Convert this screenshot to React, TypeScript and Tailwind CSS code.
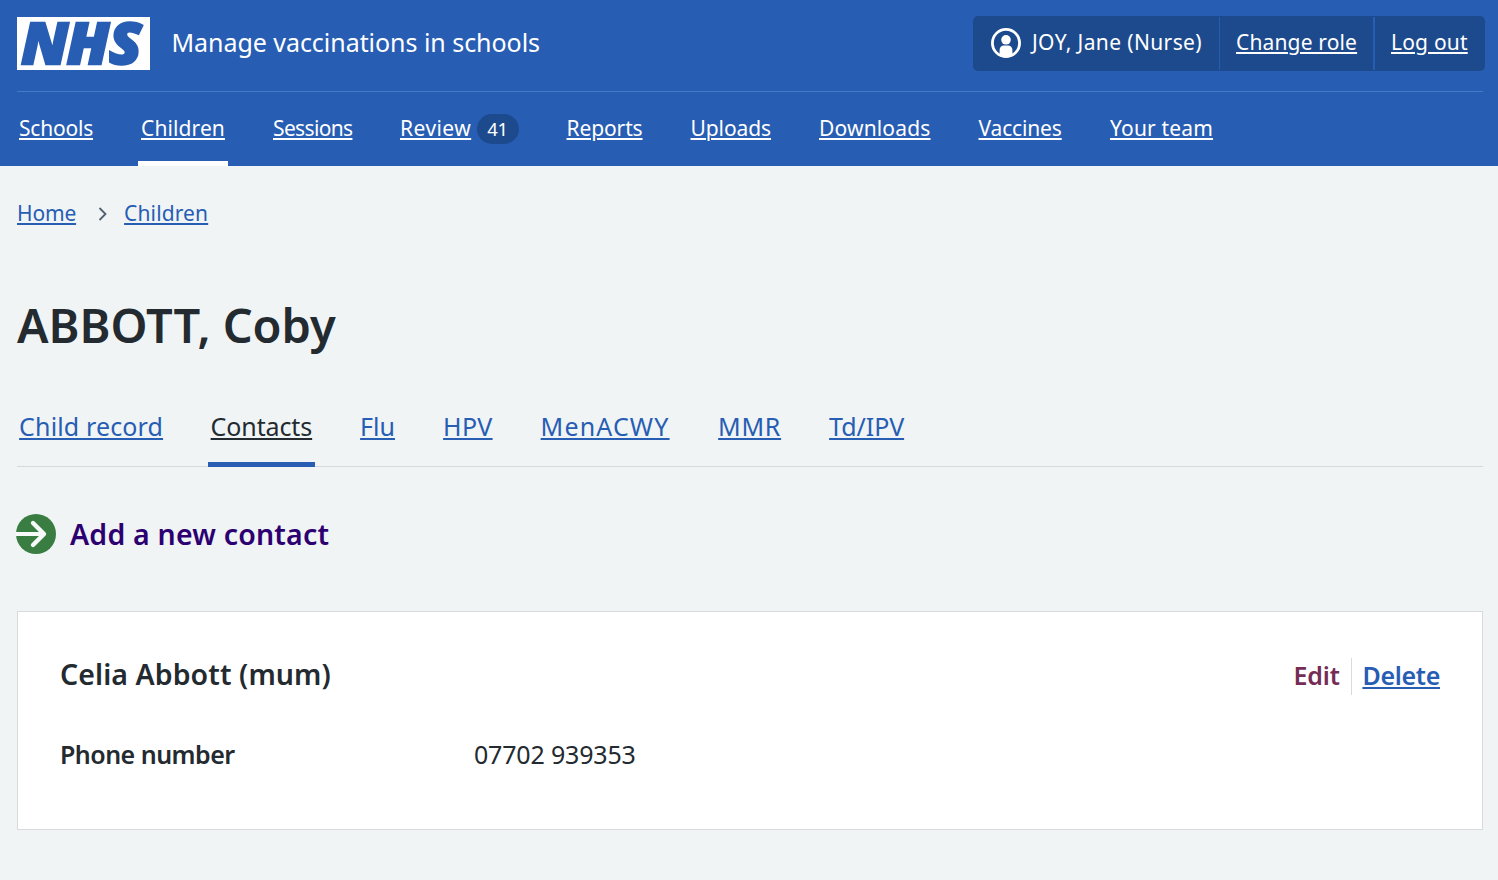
import type { ReactNode } from 'react';

const LINK = 'underline decoration-2 underline-offset-[2px] whitespace-nowrap';

type Item = { label: string; tracking: string; width: string; active?: boolean; badge?: string };

const navItems: Item[] = [
  { label: 'Schools', tracking: 'tracking-[-0.21px]', width: 'w-[74px]' },
  { label: 'Children', tracking: 'tracking-[0.11px]', width: 'w-[84px]', active: true },
  { label: 'Sessions', tracking: 'tracking-[-0.65px]', width: 'w-[79px]' },
  { label: 'Review', tracking: 'tracking-[0.45px]', width: 'w-[71px]', badge: '41' },
  { label: 'Reports', tracking: 'tracking-[-0.11px]', width: 'w-[76px]' },
  { label: 'Uploads', tracking: 'tracking-[-0.09px]', width: 'w-[80.5px]' },
  { label: 'Downloads', tracking: 'tracking-[0.17px]', width: 'w-[111.5px]' },
  { label: 'Vaccines', tracking: 'tracking-[-0.15px]', width: 'w-[83.5px]' },
  { label: 'Your team', tracking: 'tracking-[0.17px]', width: 'w-[103px]' },
];

const tabs: Item[] = [
  { label: 'Child record', tracking: 'tracking-[0.14px]', width: 'w-[143.5px]' },
  { label: 'Contacts', tracking: 'tracking-[-0.11px]', width: 'w-[101.5px]', active: true },
  { label: 'Flu', tracking: 'tracking-[0px]', width: 'w-[35px]' },
  { label: 'HPV', tracking: 'tracking-[0.27px]', width: 'w-[49.5px]' },
  { label: 'MenACWY', tracking: 'tracking-[1.15px]', width: 'w-[129.5px]' },
  { label: 'MMR', tracking: 'tracking-[0.7px]', width: 'w-[63px]' },
  { label: 'Td/IPV', tracking: 'tracking-[-0.07px]', width: 'w-[75px]' },
];

function Logo() {
  return (
    <svg
      width="133"
      height="53"
      viewBox="0 0 133 53"
      className="shrink-0 overflow-visible"
      role="img"
      aria-label="NHS"
    >
      <rect width="133" height="53" fill="#fff" />
      <text
        x="4 48 89"
        y="47"
        transform="scale(1.035 1)"
        strokeWidth="2.4"
        className="fill-[#275db3] stroke-[#275db3] font-['Open_Sans',sans-serif] text-[57.5px] font-extrabold italic"
      >
        NHS
      </text>
    </svg>
  );
}

function UserIcon() {
  return (
    <svg width="30" height="30" viewBox="0 0 30 30" fill="none" className="mt-[2px] shrink-0">
      <circle cx="15" cy="15" r="13.6" stroke="#fff" strokeWidth="2.8" />
      <circle cx="15" cy="11.8" r="4.8" fill="#fff" />
      <path d="M8.6 28v-6c0-2.7 1.8-4.5 4.4-4.5h4c2.6 0 4.4 1.8 4.4 4.5v6c-4 2-8.8 2-12.8 0Z" fill="#fff" />
    </svg>
  );
}

function AccountItem({ className, children }: { className: string; children: ReactNode }) {
  return <li className={`flex h-[53px] items-center pb-[3px] ${className}`}>{children}</li>;
}

function Header() {
  return (
    <header className="h-[166px] bg-[#275db3] pr-[15px] pl-[17px] text-white">
      <div className="flex h-[91px] items-start pt-4">
        <div className="flex flex-1 items-center pt-px">
          <Logo />
          <span className="ml-[21.4px] pb-[3px] text-[25px] leading-9 tracking-[-0.04px] whitespace-nowrap">
            Manage vaccinations in schools
          </span>
        </div>
        <ul className="-mr-[2px] flex h-[55px] w-[512px] items-center rounded-[5px] bg-[#1d4a8d] text-[21px] leading-7">
          <AccountItem className="w-[246px] gap-[11px] pl-[18px]">
            <UserIcon />
            <span className="tracking-[0.38px] whitespace-nowrap">JOY, Jane (Nurse)</span>
          </AccountItem>
          <AccountItem className="w-[154px] border-l border-[#275db3] pl-[16px]">
            <a className={`${LINK} tracking-[0.15px]`}>Change role</a>
          </AccountItem>
          <AccountItem className="flex-1 border-l-2 border-[#275db3] pl-[16px]">
            <a className={`${LINK} tracking-[0.2px]`}>Log out</a>
          </AccountItem>
        </ul>
      </div>
      <nav className="border-t border-[#4379c5]">
        <ul className="flex h-[74px] gap-[42px] text-[21px] leading-7">
          {navItems.map((item) => (
            <li
              key={item.label}
              className={`flex items-start border-b-[5px] px-[3px] pt-[22px] ${
                item.active ? 'border-white' : 'border-transparent'
              } ${item.label === 'Schools' ? '-ml-px' : ''}`}
            >
              <a className={`${LINK} ${item.tracking} ${item.width}`}>{item.label}</a>
              {item.badge && (
                <span className="ml-[5.5px] flex h-[30px] w-[42px] items-center justify-center rounded-full bg-[#1d4a8d] text-[18.5px] tracking-[-0.3px]">
                  {item.badge}
                </span>
              )}
            </li>
          ))}
        </ul>
      </nav>
    </header>
  );
}

function ContactCard() {
  return (
    <section className="mt-[57px] h-[219px] border border-[#d8dbdd] bg-white px-[42px] pt-[42px]">
      <div className="flex items-start justify-between">
        <h2 className="text-[28.5px] leading-10 font-semibold tracking-[0.08px]">Celia Abbott (mum)</h2>
        <ul className="mt-[4px] flex text-[25px] leading-[35px] font-semibold">
          <li className="border-r border-[#d8dbdd] pr-[11px] pb-[2px] text-[#752c55]">
            <a className="tracking-[-0.1px]">Edit</a>
          </li>
          <li className="pl-[10.5px] text-[#275db3]">
            <a className={`${LINK} tracking-[-0.3px]`}>Delete</a>
          </li>
        </ul>
      </div>
      <dl className="mt-[41px] flex text-[25px] leading-9">
        <dt className="w-[414px] font-semibold tracking-[-0.52px]">Phone number</dt>
        <dd className="tracking-[-0.18px]">07702 939353</dd>
      </dl>
    </section>
  );
}

export default function App() {
  return (
    <div className="h-[880px] overflow-hidden bg-[#f0f4f5] font-['Noto_Sans',sans-serif] text-[#232a30]">
      <Header />
      <main className="pr-[15px] pl-[17px]">
        <nav className="flex items-center pt-[33px] text-[21px] leading-7 text-[#275db3]">
          <a className={`${LINK} tracking-[-0.17px]`}>Home</a>
          <svg width="9" height="14" viewBox="0 0 9 14" fill="none" className="mt-[2px] mr-[17px] ml-[22px]">
            <path d="M1.5 1 7.5 7l-6 6" stroke="#4f616f" strokeWidth="1.8" />
          </svg>
          <a className={`${LINK} tracking-[0.13px]`}>Children</a>
        </nav>
        <h1 className="mt-[70px] text-[47px] leading-[56px] font-semibold tracking-[-0.05px]">ABBOTT, Coby</h1>
        <ul className="mt-[55px] flex h-[59px] gap-[42px] text-[25px] leading-9 text-[#275db3] shadow-[inset_0_-1px_0_#d5d9dc]">
          {tabs.map((tab) => (
            <li
              key={tab.label}
              className={`flex border-b-[5px] px-[3px] ${
                tab.active ? 'border-[#275db3] text-[#232a30]' : 'border-transparent'
              } ${tab.label === 'Child record' ? '-ml-[0.9px]' : ''}`}
            >
              <a className={`${LINK} ${tab.tracking} ${tab.width}`}>{tab.label}</a>
            </li>
          ))}
        </ul>
        <a className="mt-[47px] -ml-px flex h-10 items-center gap-[14px] text-[28.5px] leading-10 font-semibold text-[#2d0072]">
          <svg width="40" height="40" viewBox="0 0 40 40" fill="none">
            <circle cx="20" cy="20" r="20" fill="#397d43" />
            <path d="M0 20h27" stroke="#f8fafa" strokeWidth="4" />
            <path
              d="M17 9l11 11-11 11"
              stroke="#f8fafa"
              strokeWidth="4.4"
              strokeLinecap="round"
              strokeLinejoin="round"
            />
          </svg>
          <span className="tracking-[0.2px]">Add a new contact</span>
        </a>
        <ContactCard />
      </main>
    </div>
  );
}
